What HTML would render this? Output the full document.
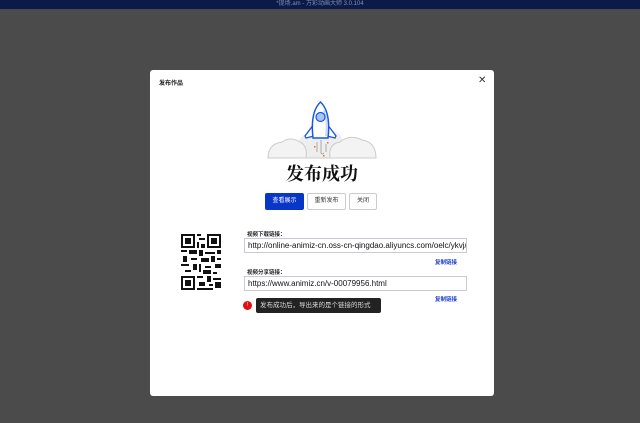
<!DOCTYPE html>
<html><head><meta charset="utf-8"><style>
*{margin:0;padding:0;box-sizing:border-box}
body{width:640px;height:423px;background:#4b4b4b;font-family:"Liberation Sans","Noto Sans CJK SC",sans-serif;position:relative;overflow:hidden}
.tb{position:absolute;left:0;top:0;width:640px;height:9px;background:#0b1a48;color:#8090b8;font-size:6px;text-align:center;line-height:9px}
.m{position:absolute;left:150px;top:70px;width:344px;height:326px;background:#fff;border-radius:3px}
.t{position:absolute;left:9px;top:8px;font-size:6px;font-weight:bold;color:#222}
.x{position:absolute;left:328px;top:5px;font-size:10px;color:#333}
h1{position:absolute;left:0;width:344px;top:90px;text-align:center;font-family:"Noto Serif CJK SC",serif;font-size:18px;font-weight:bold;color:#111}
.b{position:absolute;top:123px;height:17px;font-size:6px;line-height:15px;text-align:center;border:1px solid #ccc;border-radius:2px;color:#333;background:#fff}
.lbl{position:absolute;left:97px;font-size:5.5px;font-weight:bold;color:#222}
.in{position:absolute;left:94px;width:223px;height:15px;border:1px solid #c8cbd4;font-size:8px;line-height:13px;padding-left:3px;color:#111;white-space:nowrap;overflow:hidden}
.cp{position:absolute;left:285px;font-size:5.5px;color:#1a3bd0;font-weight:bold}
.tip{position:absolute;left:106px;top:228px;width:125px;height:15px;background:#222;color:#ddd;font-size:6.5px;line-height:15px;padding-left:4px;border-radius:2px}
.dot{position:absolute;left:93px;top:231px;width:9px;height:9px;border-radius:50%;background:#e01010;color:#fff;font-size:5px;text-align:center;line-height:9px}
</style></head><body>
<div class="tb">*提场.am - 万彩动画大师 3.0.104</div>
<div class="m">
<div class="t">发布作品</div><div class="x">✕</div>
<svg style="position:absolute;left:116px;top:30px" width="112" height="60" viewBox="0 0 112 60">
<path d="M30 58 Q28 34 50 30 L62 30 Q82 32 78 58 Z" fill="#eee"/>
<path d="M2 58 Q2 44 16 42 Q24 36 34 42 Q42 46 40 58 Z" fill="#f3f3f3" stroke="#ccc" stroke-width="1"/>
<path d="M64 58 Q62 44 74 42 Q84 34 96 40 Q110 42 110 58 Z" fill="#f3f3f3" stroke="#ccc" stroke-width="1"/>
<path d="M2 58 H110" stroke="#ccc" stroke-width="1"/>
<path d="M51 42 L51 52 M55 40 L55 53 Q56 55 58 53 M60 44 L60 52" stroke="#999" stroke-width="0.8" fill="none"/>
<rect x="48" y="46" width="1.5" height="1.5" fill="#f07010"/><rect x="61" y="42" width="1.5" height="1.5" fill="#f07010"/><rect x="57" y="55" width="1.5" height="1.5" fill="#f07010"/>
<path d="M48 24 L39 36 L40 38 L48 36 Z M61 24 L70 36 L69 38 L61 36 Z" fill="#fff" stroke="#1a56e0" stroke-width="1.3"/>
<path d="M54.5 2 Q44 12 47 38 L62 38 Q65 12 54.5 2 Z" fill="#fff" stroke="#1a56e0" stroke-width="1.5"/>
<path d="M58 10 Q62 20 60 36" stroke="#c8dcf8" stroke-width="2" fill="none"/>
<circle cx="54.5" cy="17" r="4.5" fill="#a8c6f4" stroke="#1a56e0" stroke-width="1.2"/>
</svg>
<h1>发布成功</h1>
<div class="b" style="left:115px;width:39px;background:#0a36c8;border-color:#0a36c8;color:#fff">查看展示</div>
<div class="b" style="left:157px;width:39px">重新发布</div>
<div class="b" style="left:199px;width:28px">关闭</div>
<svg style="position:absolute;left:31px;top:164px" width="40" height="56" viewBox="0 0 20 28" shape-rendering="crispEdges">
<g fill="#111">
<path d="M0 0h7v7h-7zM1 1v5h5v-5zM2 2h3v3h-3z" fill-rule="evenodd"/>
<path d="M13 0h7v7h-7zM14 1v5h5v-5zM15 2h3v3h-3z" fill-rule="evenodd"/>
<path d="M0 21h7v7h-7zM1 22v5h5v-5zM2 23h3v3h-3z" fill-rule="evenodd"/>
<rect x="8" y="0" width="2" height="1"/><rect x="9" y="2" width="3" height="1"/><rect x="8" y="4" width="1" height="3"/><rect x="10" y="5" width="2" height="2"/>
<rect x="0" y="8" width="3" height="1"/><rect x="4" y="8" width="4" height="2"/><rect x="9" y="8" width="2" height="3"/><rect x="12" y="9" width="5" height="1"/><rect x="18" y="8" width="2" height="2"/>
<rect x="1" y="11" width="2" height="3"/><rect x="5" y="12" width="3" height="1"/><rect x="10" y="12" width="4" height="2"/><rect x="15" y="11" width="2" height="3"/><rect x="18" y="12" width="2" height="1"/>
<rect x="0" y="15" width="4" height="1"/><rect x="6" y="15" width="2" height="3"/><rect x="9" y="15" width="1" height="4"/><rect x="12" y="16" width="3" height="1"/><rect x="17" y="15" width="3" height="2"/>
<rect x="2" y="18" width="3" height="1"/><rect x="11" y="18" width="4" height="2"/><rect x="16" y="19" width="2" height="1"/>
<rect x="8" y="21" width="3" height="1"/><rect x="13" y="21" width="2" height="3"/><rect x="16" y="22" width="4" height="1"/><rect x="9" y="24" width="3" height="2"/><rect x="17" y="24" width="3" height="3"/><rect x="8" y="27" width="8" height="1"/><rect x="14" y="25" width="2" height="1"/>
</g></svg>
<div class="lbl" style="top:160px">视频下载链接：</div>
<div class="in" style="top:168px">http://online-animiz-cn.oss-cn-qingdao.aliyuncs.com/oelc/ykvj/vi</div>
<div class="cp" style="top:188px">复制链接</div>
<div class="lbl" style="top:198px">视频分享链接：</div>
<div class="in" style="top:206px">https://www.animiz.cn/v-00079956.html</div>
<div class="cp" style="top:225px">复制链接</div>
<div class="dot">!</div>
<div class="tip">发布成功后，导出来的是个链接的形式</div>
</div>
</body></html>
